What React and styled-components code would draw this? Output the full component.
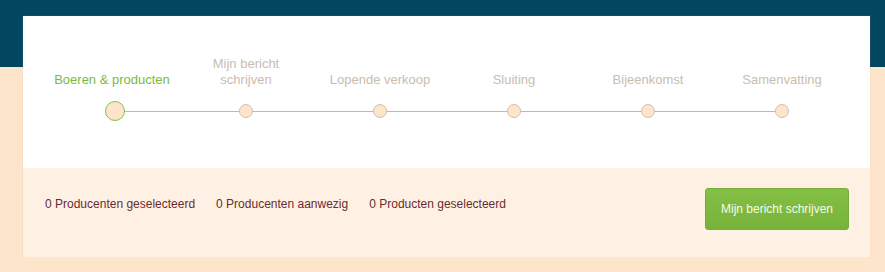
import React from "react";
import styled, { createGlobalStyle } from "styled-components";

const Global = createGlobalStyle`
  html, body { margin: 0; padding: 0; }
  body {
    background: #fde5cc;
    font-family: "Liberation Sans", Arial, sans-serif;
    -webkit-font-smoothing: antialiased;
  }
`;

const Header = styled.div`
  height: 67px;
  background: #02475f;
`;

const Card = styled.div`
  margin: -51px 15px 0 23px;
  height: 241px;
  background: #ffffff;
  display: flex;
  flex-direction: column;
  box-shadow: 0 0 1px rgba(200, 170, 140, 0.5);
`;

const Steps = styled.ol`
  list-style: none;
  margin: 0;
  padding: 40px 21px 0 22px;
  height: 152px;
  box-sizing: border-box;
  display: grid;
  grid-template-columns: repeat(6, 1fr);
`;

const Step = styled.li`
  position: relative;
  display: flex;
  flex-direction: column;
  align-items: center;
  &:not(:last-child)::after {
    content: "";
    position: absolute;
    left: 50%;
    width: 100%;
    top: 55px;
    height: 1px;
    background: #c5b6a9;
  }
`;

const Label = styled.div`
  height: 32px;
  display: flex;
  align-items: flex-end;
  text-align: center;
  font-size: 13px;
  line-height: 16px;
  color: ${(p) => (p.$active ? "#7cba3f" : "#cbbcae")};
`;

const DotRow = styled.div`
  margin-top: 13px;
  height: 20px;
  display: flex;
  align-items: center;
  justify-content: center;
  position: relative;
  z-index: 1;
`;

const Dot = styled.span`
  display: block;
  box-sizing: border-box;
  width: ${(p) => (p.$active ? 20 : 14)}px;
  height: ${(p) => (p.$active ? 20 : 14)}px;
  margin-left: ${(p) => (p.$active ? 6 : 0)}px;
  border-radius: 50%;
  background: #fde4ca;
  border: 1px solid ${(p) => (p.$active ? "#86c04a" : "#d4c0ae")};
`;

const Footer = styled.div`
  flex: 1;
  background: #fef1e4;
  display: flex;
  align-items: flex-start;
  justify-content: space-between;
  padding: 20px 21px 0 22px;
`;

const Stats = styled.div`
  display: flex;
  gap: 21px;
  margin-top: 8px;
`;

const Stat = styled.span`
  font-size: 12px;
  line-height: 16px;
  color: #6a2b2f;
`;

const Button = styled.button`
  width: 144px;
  height: 42px;
  border: 1px solid #74ad38;
  border-radius: 3px;
  background: linear-gradient(#85c046, #77b339);
  color: #f4fbe9;
  font-family: "Liberation Sans", Arial, sans-serif;
  font-size: 12px;
  cursor: pointer;
  padding: 0;
`;

const steps = [
  "Boeren & producten",
  ["Mijn bericht", "schrijven"],
  "Lopende verkoop",
  "Sluiting",
  "Bijeenkomst",
  "Samenvatting",
];

export default function App() {
  return (
    <>
      <Global />
      <Header />
      <Card>
        <Steps>
          {steps.map((s, i) => (
            <Step key={i}>
              <Label $active={i === 0}>
                <span>
                  {Array.isArray(s) ? (
                    <>
                      {s[0]}
                      <br />
                      {s[1]}
                    </>
                  ) : (
                    s
                  )}
                </span>
              </Label>
              <DotRow>
                <Dot $active={i === 0} />
              </DotRow>
            </Step>
          ))}
        </Steps>
        <Footer>
          <Stats>
            <Stat>0 Producenten geselecteerd</Stat>
            <Stat>0 Producenten aanwezig</Stat>
            <Stat>0 Producten geselecteerd</Stat>
          </Stats>
          <Button>Mijn bericht schrijven</Button>
        </Footer>
      </Card>
    </>
  );
}
